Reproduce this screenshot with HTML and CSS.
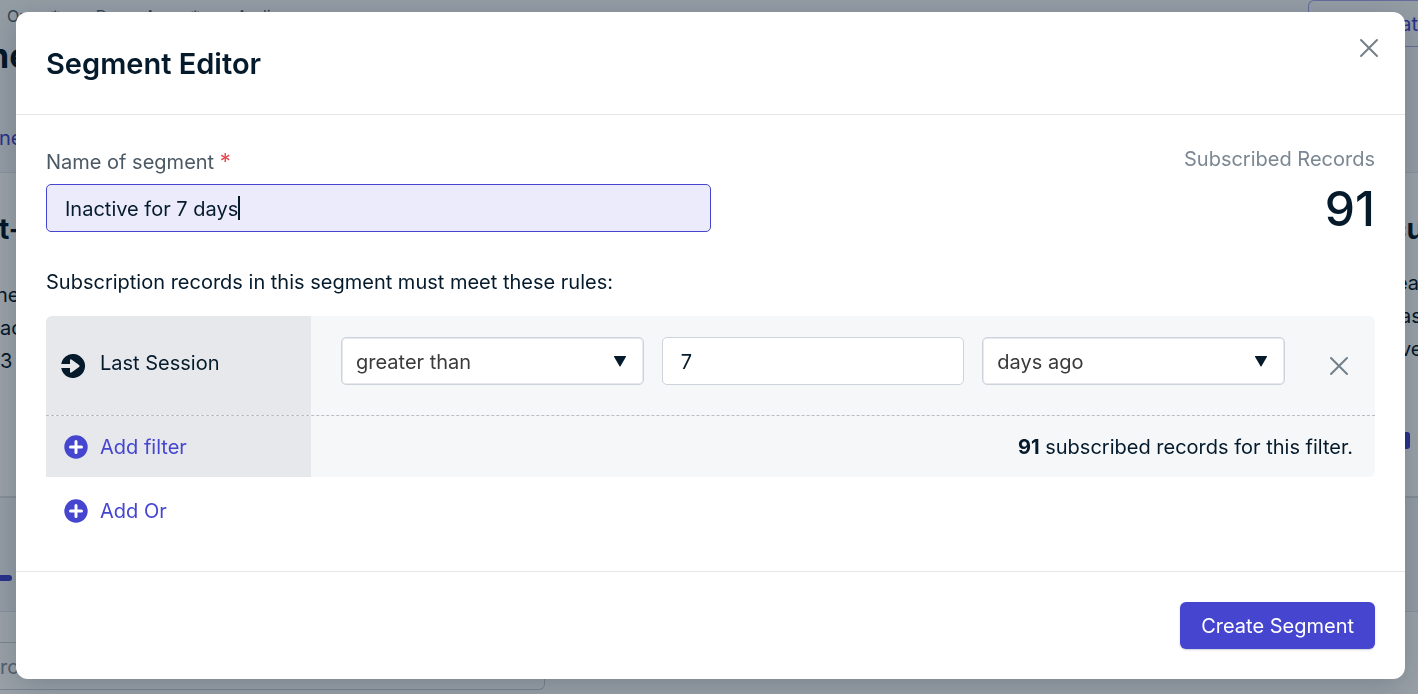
FILE: index.html
```html
<!DOCTYPE html>
<html lang="en">
<head>
    <meta charset="UTF-8">
    <meta name="viewport" content="width=device-width, initial-scale=1.0">
    <title>Segment Editor</title>
    <link rel="stylesheet" href="styles.css">
</head>
<body>

    <!-- page under the dialog -->
    <div class="page" aria-hidden="true">
        <div class="pageTop">
            <div class="crumbs"><span>Org</span><span>⚙</span><span>▸</span><span>Demo App</span><span>⚙</span><span>▸</span><span>Audience</span></div>
            <button class="outlineBtn" tabindex="-1">at</button>
            <div class="pageTitle">ne</div>
            <div class="pageTab">ne</div>
        </div>
        <div class="cards">
            <div class="card">
                <div class="cardTitle">t-in</div>
                <div class="cardText">nec<br>ac<br>3</div>
            </div>
            <div class="card cardRight">
                <div class="cardTitle">cu</div>
                <div class="cardText">ea<br>as<br>ve</div>
                <div class="cardBtn"></div>
            </div>
        </div>
        <div class="band"><div class="bandMark"></div></div>
        <div class="listPanel"><div class="searchBox">rch</div></div>
    </div>

    <div class="overlay">
        <form class="dialog" role="dialog" aria-labelledby="dialogTitle">
            <div class="dialogHead">
                <h1 class="dialogTitle" id="dialogTitle">Segment Editor</h1>
                <button class="closeBtn" type="button" aria-label="Close">
                    <svg width="20" height="20" viewBox="0 0 20 20"><path d="M2 2L18 18M18 2L2 18"/></svg>
                </button>
            </div>

            <div class="dialogBody">
                <div class="topRow">
                    <div class="nameField">
                        <label class="label" for="segmentName">Name of segment <span class="required">*</span></label>
                        <div class="nameBox">
                            <input class="input nameInput" id="segmentName" type="text" value="Inactive for 7 days">
                            <span class="caretLine"><span class="caretText">Inactive for 7 days</span></span>
                        </div>
                    </div>
                    <div class="total">
                        <div class="totalLabel">Subscribed Records</div>
                        <div class="totalValue">91</div>
                    </div>
                </div>

                <p class="rulesText">Subscription records in this segment must meet these rules:</p>

                <div class="group">
                    <div class="row">
                        <div class="side sideName">
                            <svg class="sessionIcon" width="24" height="24" viewBox="0 0 24 24">
                                <path d="M0.200 10A12 12 0 1 1 0.200 14H9V17.500Q9 19.500 10.800 18.300L18 13Q19.200 12 18 11L10.800 5.700Q9 4.500 9 6.500V10Z"/>
                            </svg>
                            <span>Last Session</span>
                        </div>
                        <div class="fields">
                            <div class="selectBox">
                                <select class="input select" aria-label="Condition">
                                    <option>greater than</option>
                                    <option>less than</option>
                                </select>
                                <svg class="arrow" width="14" height="12" viewBox="0 0 14 12"><path d="M1.500 1H12.500Q13.400 1 13 1.800L7.600 11Q7 12 6.400 11L1 1.800Q0.600 1 1.500 1Z"/></svg>
                            </div>
                            <input class="input" type="text" value="7" aria-label="Value">
                            <div class="selectBox">
                                <select class="input select" aria-label="Unit">
                                    <option>days ago</option>
                                    <option>hours ago</option>
                                </select>
                                <svg class="arrow" width="14" height="12" viewBox="0 0 14 12"><path d="M1.500 1H12.500Q13.400 1 13 1.800L7.600 11Q7 12 6.400 11L1 1.800Q0.600 1 1.500 1Z"/></svg>
                            </div>
                            <button class="removeBtn" type="button" aria-label="Remove filter">
                                <svg width="20" height="20" viewBox="0 0 20 20"><path d="M2 2L18 18M18 2L2 18"/></svg>
                            </button>
                        </div>
                    </div>
                    <div class="row rowAdd">
                        <div class="side">
                            <button class="addBtn" type="button">
                                <svg width="24" height="24" viewBox="0 0 24 24"><circle cx="12" cy="12" r="11.700"/><path d="M12 6.500V17.500M6.500 12H17.500"/></svg>
                                Add filter
                            </button>
                        </div>
                        <div class="count"><strong>91</strong> subscribed records for this filter.</div>
                    </div>
                </div>

                <button class="addBtn addOr" type="button">
                    <svg width="24" height="24" viewBox="0 0 24 24"><circle cx="12" cy="12" r="11.700"/><path d="M12 6.500V17.500M6.500 12H17.500"/></svg>
                    Add Or
                </button>
            </div>

            <div class="dialogFoot">
                <button class="createBtn" type="button">Create Segment</button>
            </div>
        </form>
    </div>

</body>
</html>
```
FILE: styles.css
```css
*{
    box-sizing: border-box;
    padding: 0;
    margin: 0;
}
body{
    font-family: Inter, "Liberation Sans", sans-serif;
    font-size: 20px;
    line-height: 32px;
    color: #051b2c;
    background-color: #f5f7f9;
    overflow: hidden;
}
button,input,select{
    font: inherit;
    color: inherit;
}
button{
    border: 0;
    background: none;
    cursor: pointer;
}
svg{
    display: block;
    flex: none;
}

/* page under the dialog */
.page{
    height: 100vh;
    overflow: hidden;
}
.pageTop{
    display: grid;
    grid-template-columns: 1fr 120px;
    grid-template-rows: 32px 48px 92px;
}
.crumbs{
    display: flex;
    gap: 13px;
    padding-left: 7px;
    font-size: 16px;
    color: #55636f;
}
.outlineBtn{
    grid-column: 2;
    grid-row: 1 / 3;
    height: 47px;
    margin-left: 10px;
    border: 1px solid #a5a8ee;
    border-right: 0;
    border-radius: 6px 0 0 6px;
    color: #4545d0;
    text-align: right;
}
.pageTitle{
    grid-row: 2;
    font-size: 34px;
    font-weight: 700;
    line-height: 48px;
    text-indent: -12px;
}
.pageTab{
    grid-row: 3;
    padding-top: 42px;
    color: #4545d0;
    text-indent: -1px;
}
.cards{
    display: flex;
    justify-content: space-between;
    height: 326px;
    border-top: 1px solid #e2e6ea;
    border-bottom: 2px solid #dde1e5;
    background-color: #fff;
}
.card{
    padding-top: 40px;
}
.cardRight{
    width: 18px;
}
.cardTitle{
    font-size: 28px;
    font-weight: 700;
    text-indent: -1px;
}
.cardText{
    padding-top: 34px;
    line-height: 33px;
    text-indent: -4px;
}
.cardRight .cardTitle{
    text-indent: -10px;
}
.cardRight .cardText{
    padding-top: 22px;
}
.cardBtn{
    width: 10px;
    height: 17px;
    margin-top: 66px;
    border-radius: 0 3px 3px 0;
    background-color: #4545d0;
}
.band{
    height: 113px;
    padding-top: 77px;
}
.bandMark{
    width: 12px;
    height: 6px;
    border-radius: 0 3px 3px 0;
    background-color: #4545d0;
}
.listPanel{
    height: 100px;
    padding-top: 30px;
    border-top: 1px solid #e2e6ea;
    background-color: #fff;
}
.searchBox{
    width: 545px;
    height: 48px;
    border: 1px solid #cbd2d9;
    border-left: 0;
    border-radius: 0 6px 6px 0;
    line-height: 48px;
    color: #8a949e;
}

/* dialog */
.overlay{
    position: fixed;
    inset: 0;
    padding: 12px 13px 12px 16px;
    background-color: rgba(0, 21, 38, 0.4);
    overflow: hidden;
}
.dialog{
    border-radius: 12px;
    background-color: #fff;
    box-shadow: 0 8px 30px rgba(0, 21, 38, 0.2);
}
.dialogHead{
    display: flex;
    justify-content: space-between;
    padding: 26px 26px 30px 30px;
    border-bottom: 1px solid #e5e7e9;
}
.dialogTitle{
    padding-top: 6px;
    font-size: 29px;
    font-weight: 600;
    line-height: 40px;
}
.closeBtn,.removeBtn{
    height: 20px;
}
.closeBtn path,.removeBtn path{
    fill: none;
    stroke: #72808c;
    stroke-width: 2;
    stroke-linecap: round;
}
.dialogBody{
    padding: 28px 30px 44px;
}
.topRow{
    display: flex;
    justify-content: space-between;
}
.nameField{
    width: 50%;
}
.label{
    display: block;
    height: 35px;
    padding-top: 2px;
    margin-bottom: 6px;
    color: #4b5965;
}
.required{
    font-size: 22px;
    color: #e8474c;
}
.input{
    width: 100%;
    height: 48px;
    padding: 2px 18px 0;
    border: 1px solid #ccd3db;
    border-radius: 5px;
    background-color: #fff;
    outline: none;
}
.nameBox,.selectBox{
    position: relative;
}
.nameInput{
    display: block;
    border-color: #4545d0;
    background-color: #ecebfb;
}
.caretLine{
    position: absolute;
    top: 12px;
    left: 19px;
    height: 24px;
    border-right: 2px solid #051b2c;
    pointer-events: none;
}
.caretText{
    visibility: hidden;
}
.total{
    text-align: right;
}
.totalLabel{
    color: #7b8792;
}
.totalValue{
    margin-top: 6px;
    font-size: 48px;
    font-weight: 500;
    line-height: 56px;
}
.rulesText{
    margin: 29px 0 18px;
}
.group{
    border-radius: 6px 6px 6px 0;
    background-color: #f5f7f9;
    overflow: hidden;
}
.row{
    display: flex;
}
.side{
    display: flex;
    align-items: center;
    flex: 0 0 265px;
    padding-left: 18px;
    background-color: #e6e8ec;
}
.sideName{
    gap: 15px;
    padding: 0 0 6px 15px;
}
.sessionIcon{
    margin-top: 6px;
}
.sessionIcon,.arrow{
    fill: #051b2c;
}
.fields{
    display: grid;
    grid-template-columns: repeat(3, 1fr) 72px;
    gap: 18px;
    flex: 1;
    padding: 21px 0 30px 30px;
}
.select{
    padding: 2px 40px 0 14px;
    box-shadow: inset 0 0 0 1px #e6e9ed;
    appearance: none;
    color: #3a3a3a;
}
.arrow{
    position: absolute;
    top: 18px;
    right: 17px;
    pointer-events: none;
}
.removeBtn{
    margin-top: 19px;
    justify-self: center;
}
.rowAdd{
    min-height: 62px;
    border-top: 1px dashed #b9bec3;
}
.addBtn{
    display: flex;
    align-items: center;
    gap: 12px;
    color: #4545d0;
}
.addBtn circle{
    fill: #4545d0;
}
.addBtn path{
    stroke: #fff;
    stroke-width: 3;
    stroke-linecap: round;
}
.count{
    flex: 1;
    align-self: center;
    padding-right: 22px;
    text-align: right;
}
.addOr{
    margin: 18px 0 0 18px;
}
.dialogFoot{
    display: flex;
    justify-content: flex-end;
    padding: 30px;
    border-top: 1px solid #e5e7e9;
}
.createBtn{
    height: 47px;
    padding: 0 21px;
    border-radius: 6px;
    background-color: #4545d0;
    color: #fff;
    box-shadow: 0 1px 2px rgba(5, 27, 44, 0.2);
}
```
